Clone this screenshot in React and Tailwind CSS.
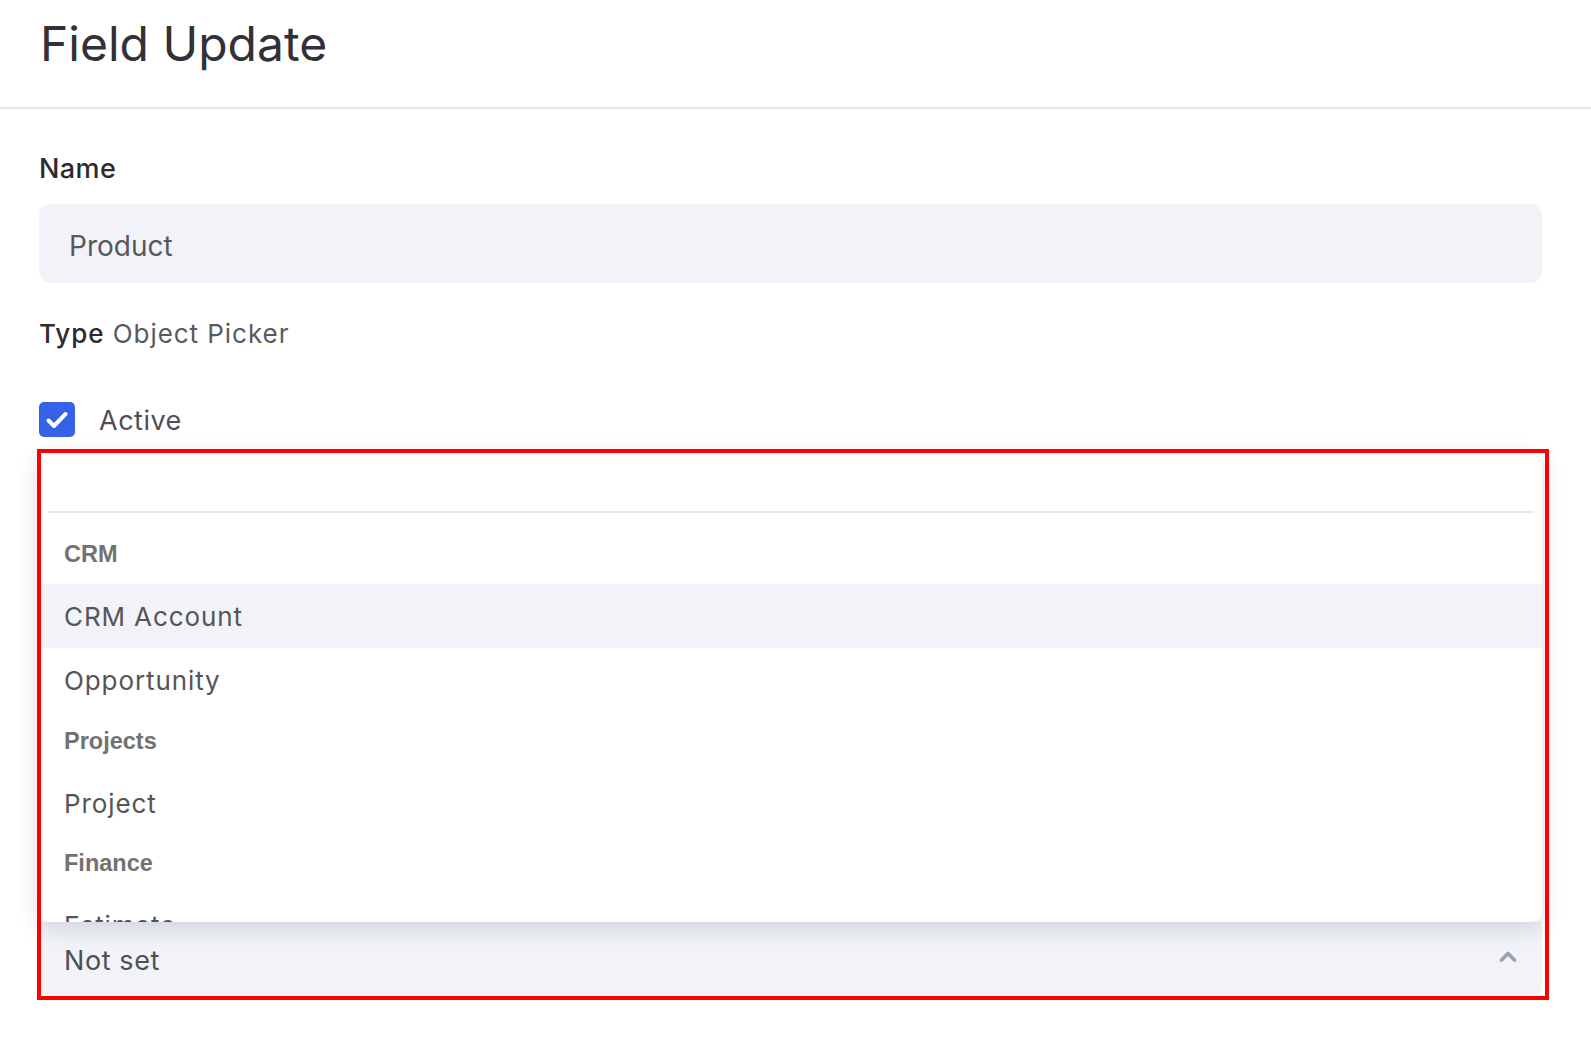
import React from "react";

const font = { fontFamily: "Inter, 'Noto Sans', sans-serif" };

function Chevron() {
  return (
    <svg width="18" height="12" viewBox="0 0 18 12" fill="none" className="mb-[6px] mr-[1px]">
      <path d="M2.5 10 L9 3.5 L15.5 10" stroke="#98a1ad" strokeWidth="3.6" strokeLinecap="round" strokeLinejoin="round" />
    </svg>
  );
}

function Check() {
  return (
    <svg width="36" height="35" viewBox="0 0 36 35" fill="none">
      <path d="M9.5 18.5 L15 24 L26.5 12" stroke="#ffffff" strokeWidth="4" strokeLinecap="round" strokeLinejoin="round" />
    </svg>
  );
}

function GroupHeader({ children, h }) {
  return (
    <div
      className={
        (h === "s" ? "h-[58px]" : "h-[59px]") +
        " flex items-center px-[25px] text-[23.5px] font-bold text-[#727272]"
      }
      style={{ fontFamily: "'Liberation Sans', Arial, sans-serif" }}
    >
      {children}
    </div>
  );
}

function Item({ children, active }) {
  return (
    <div
      className={
        active
          ? "h-[64px] flex items-center px-[25px] text-[26px] tracking-[0.9px] text-[#555558] bg-[#f2f3f8]"
          : "h-[64px] flex items-center px-[25px] text-[26px] tracking-[0.9px] text-[#555558]"
      }
    >
      {children}
    </div>
  );
}

export default function App() {
  return (
    <div className="w-[1591px] h-[1042px] bg-white overflow-hidden" style={font}>
      <div className="h-[109px] border-b-2 border-[#e4e8ef] pl-[40px] pt-[14px]">
        <h1 className="text-[48px] leading-[59px] font-normal text-[#313136]">Field Update</h1>
      </div>
      <div className="pl-[39px] pr-[49px]">
        <div className="mt-[43px] text-[27px] leading-[33px] font-medium tracking-[0.4px] text-[#2b2b2e]">Name</div>
        <div className="mt-[19px] h-[79px] rounded-[12px] bg-[#f2f3f8] flex items-center pl-[30px] pt-[5px] text-[28px] text-[#58585c]">
          Product
        </div>
        <div className="mt-[35px] text-[26px] leading-[32px] tracking-[0.95px] text-[#5a5a5e]">
          <span className="font-medium text-[#2b2b2e]">Type</span> Object Picker
        </div>
        <div className="mt-[52px] flex items-center h-[35px]">
          <div className="w-[36px] h-[35px] rounded-[5px] bg-[#3662e8] flex items-center justify-center">
            <Check />
          </div>
          <span className="ml-[24px] pt-[4px] text-[27px] tracking-[0.5px] text-[#4f4f53]">Active</span>
        </div>

        <div className="relative mt-[16px] h-[543px] flex flex-col">
          <div className="relative z-10 h-[469px] bg-white rounded-b-[10px] shadow-[0_6px_22px_rgba(30,40,70,0.16)] overflow-hidden">
            <div className="h-[58px]" />
            <div className="mx-[8px] h-[2px] bg-[#e4e7f1]" />
            <div className="pt-[12px]">
              <GroupHeader>CRM</GroupHeader>
              <Item active>CRM Account</Item>
              <Item>Opportunity</Item>
              <GroupHeader>Projects</GroupHeader>
              <Item>Project</Item>
              <GroupHeader h="s">Finance</GroupHeader>
              <Item>Estimate</Item>
            </div>
          </div>
          <div className="h-[74px] bg-[#f1f3f8] rounded-b-[10px] flex items-center justify-between pl-[25px] pr-[24px]">
            <span className="pt-[4px] text-[27px] tracking-[0.6px] text-[#4f4f53]">Not set</span>
            <Chevron />
          </div>
          <div className="absolute z-20 left-[-2px] top-[-4px] w-[1512px] h-[551px] border-4 border-[#ff0000] pointer-events-none" />
        </div>
      </div>
    </div>
  );
}
